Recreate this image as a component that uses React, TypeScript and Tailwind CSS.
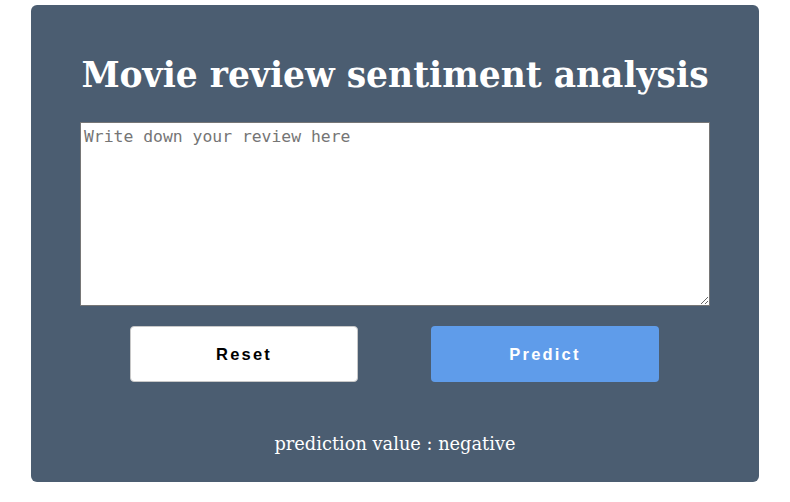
export default function App() {
  return (
    <div className="w-[790px] h-[502px] bg-white pt-[5px] pl-[31px]">
      <div className="w-[728px] h-[477px] bg-[#4b5d71] rounded-[6px] flex flex-col items-center">
        <h1 className="mt-[50px] text-white font-bold text-[34.5px] leading-[40px] [font-family:'DejaVu_Serif',serif]">
          Movie review sentiment analysis
        </h1>
        <textarea
          className="mt-[27px] w-[630px] h-[184px] bg-white border border-[#767676] px-[3px] pt-[4px] text-[16.4px] leading-[19px] [font-family:'DejaVu_Sans_Mono',monospace] placeholder:text-[#757575] text-black outline-none"
          placeholder="Write down your review here"
        />
        <div className="w-[630px] mt-[20px] flex pl-[50px]">
          <button className="w-[228px] h-[56px] bg-white border border-[#c8c8c8] rounded-[4px] text-black font-bold text-[16.5px] tracking-[2.2px] [font-family:'Liberation_Sans',Arial,sans-serif]">
            Reset
          </button>
          <button className="ml-[73px] w-[228px] h-[56px] bg-[#5f9cea] rounded-[4px] text-white font-bold text-[16.5px] tracking-[2.2px] [font-family:'Liberation_Sans',Arial,sans-serif]">
            Predict
          </button>
        </div>
        <p className="mt-[51px] text-white text-[17.8px] leading-[22px] [font-family:'DejaVu_Serif',serif]">
          prediction value : negative
        </p>
      </div>
    </div>
  );
}
